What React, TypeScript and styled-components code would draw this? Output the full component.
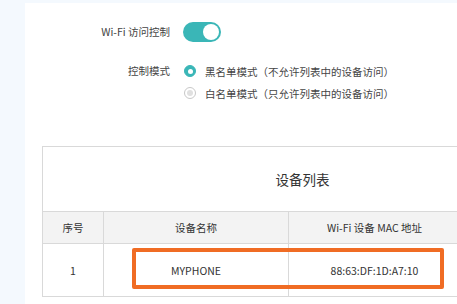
import React from "react";
import styled, { createGlobalStyle } from "styled-components";

const Global = createGlobalStyle`
  html, body { margin: 0; padding: 0; background: #f4f9fe; overflow: hidden; }
  body { font-family: "Noto Sans CJK SC", "Noto Sans", sans-serif; color: #333; }
`;

const Page = styled.div`
  display: flex;
  padding: 3px 0 0 25px;
  height: 301px;
`;

const Panel = styled.div`
  flex: 1;
  background: #fff;
  padding-top: 19px;
`;

const Row = styled.div<{ $h: number }>`
  display: grid;
  grid-template-columns: 145px 1fr;
  column-gap: 13px;
  align-items: center;
  height: ${(p) => p.$h}px;
`;

const Label = styled.div`
  text-align: right;
  font-size: 10.5px;
  color: #444;
  line-height: 1;
`;

const Toggle = styled.div<{ $on: boolean }>`
  width: 38px;
  height: 20px;
  border-radius: 10px;
  background: ${(p) => (p.$on ? "#3ab6b7" : "#ccc")};
  display: flex;
  align-items: center;
  justify-content: ${(p) => (p.$on ? "flex-end" : "flex-start")};
  padding: 0 2px;
  box-sizing: border-box;
`;

const Knob = styled.div`
  width: 16px;
  height: 16px;
  border-radius: 50%;
  background: #fff;
`;

const Group = styled.div`
  margin-top: 18px;
`;

const Option = styled.div`
  display: flex;
  align-items: center;
  gap: 9px;
  font-size: 10.5px;
  color: #444;
  padding-left: 1px;
`;

const Radio = styled.span<{ $on: boolean }>`
  width: 12px;
  height: 12px;
  border-radius: 50%;
  box-sizing: border-box;
  display: inline-flex;
  align-items: center;
  justify-content: center;
  background: ${(p) => (p.$on ? "#3ab6b7" : "#fff")};
  border: 1px solid ${(p) => (p.$on ? "#3ab6b7" : "#c8c8c8")};
  &::after {
    content: "";
    width: ${(p) => (p.$on ? 5 : 6)}px;
    height: ${(p) => (p.$on ? 5 : 6)}px;
    border-radius: 50%;
    background: ${(p) => (p.$on ? "#fff" : "#e0e0e0")};
  }
`;

const TableWrap = styled.div`
  position: relative;
  margin: 42px 0 0 17px;
`;

const Table = styled.table`
  border-collapse: collapse;
  width: 418px;
  table-layout: fixed;
  font-size: 10.5px;
  color: #333;
  td, th {
    border: 1px solid #d9d9d9;
    text-align: center;
    padding: 0;
    font-weight: normal;
  }
`;

const TitleCell = styled.td`
  height: 64px;
  font-size: 13.5px;
  padding-left: 102px !important;
  color: #333;
`;

const HeadCell = styled.th`
  height: 31px;
  background: #f3f3f3;
`;

const DataCell = styled.td`
  height: 52px;
`;

const Highlight = styled.div`
  position: absolute;
  left: 90px;
  top: 102px;
  width: 312px;
  height: 41px;
  border: 4px solid #f06c24;
  border-radius: 2px;
  box-sizing: border-box;
`;

export default function App() {
  return (
    <>
      <Global />
      <Page>
        <Panel>
          <Row $h={20}>
            <Label>Wi-Fi 访问控制</Label>
            <Toggle $on>
              <Knob />
            </Toggle>
          </Row>
          <Group>
            <Row $h={22}>
              <Label>控制模式</Label>
              <Option>
                <Radio $on />
                黑名单模式（不允许列表中的设备访问）
              </Option>
            </Row>
            <Row $h={22}>
              <span />
              <Option>
                <Radio $on={false} />
                白名单模式（只允许列表中的设备访问）
              </Option>
            </Row>
          </Group>
          <TableWrap>
            <Table>
              <colgroup>
                <col style={{ width: 61 }} />
                <col style={{ width: 185 }} />
                <col style={{ width: 172 }} />
              </colgroup>
              <tbody>
                <tr>
                  <TitleCell colSpan={3}>设备列表</TitleCell>
                </tr>
                <tr>
                  <HeadCell>序号</HeadCell>
                  <HeadCell>设备名称</HeadCell>
                  <HeadCell>Wi-Fi 设备 MAC 地址</HeadCell>
                </tr>
                <tr>
                  <DataCell>1</DataCell>
                  <DataCell>MYPHONE</DataCell>
                  <DataCell>88:63:DF:1D:A7:10</DataCell>
                </tr>
              </tbody>
            </Table>
            <Highlight />
          </TableWrap>
        </Panel>
      </Page>
    </>
  );
}
